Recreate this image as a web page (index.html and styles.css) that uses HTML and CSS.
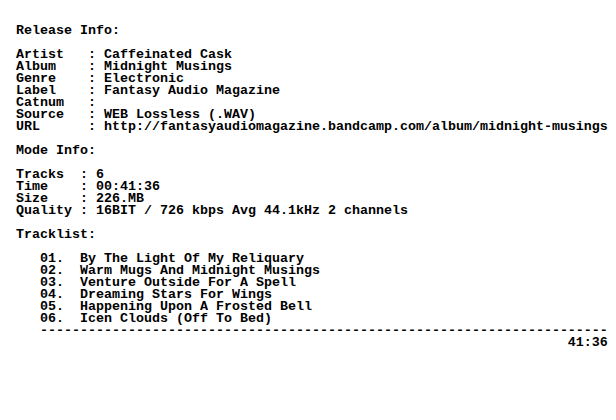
FILE: index.html
```html
<!DOCTYPE html>
<html>
<head>
<meta charset="utf-8">
<link rel="stylesheet" href="styles.css">
</head>
<body>
<pre class="nfo">
Release Info:

Artist   : Caffeinated Cask
Album    : Midnight Musings
Genre    : Electronic
Label    : Fantasy Audio Magazine
Catnum   :
Source   : WEB Lossless (.WAV)
URL      : http://fantasyaudiomagazine.bandcamp.com/album/midnight-musings

Mode Info:

Tracks  : 6
Time    : 00:41:36
Size    : 226.MB
Quality : 16BIT / 726 kbps Avg 44.1kHz 2 channels

Tracklist:

   01.  By The Light Of My Reliquary
   02.  Warm Mugs And Midnight Musings
   03.  Venture Outside For A Spell
   04.  Dreaming Stars For Wings
   05.  Happening Upon A Frosted Bell
   06.  Icen Clouds (Off To Bed)
   -----------------------------------------------------------------------
                                                                     41:36
</pre>
</body>
</html>
```
FILE: styles.css
```css
html, body {
  margin: 0;
  padding: 0;
  background: #ffffff;
}
.nfo {
  margin: 0;
  padding: 25px 0 0 16px;
  font-family: "Liberation Mono", "DejaVu Sans Mono", monospace;
  font-weight: bold;
  font-size: 13.3333px;
  line-height: 12px;
  color: #000000;
}
```
